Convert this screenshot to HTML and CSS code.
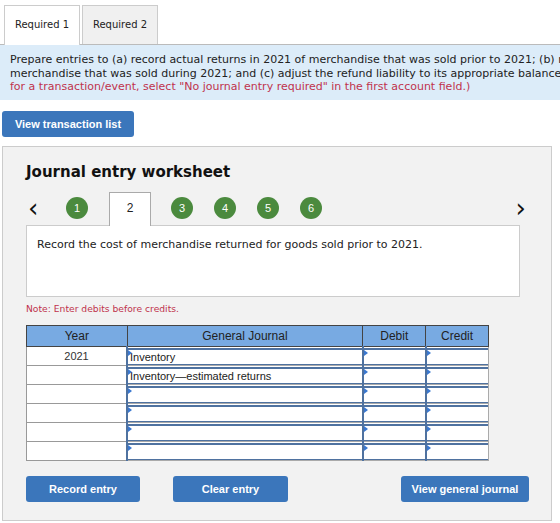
FILE: index.html
```html
<!DOCTYPE html>
<html lang="en">
<head>
    <meta charset="UTF-8">
    <title>Journal entry worksheet</title>
    <link rel="stylesheet" href="styles.css">
</head>
<body>
    <div class="tabs">
        <div class="tab active">Required 1</div>
        <div class="tab">Required 2</div>
    </div>
    <div class="instructions">
        Prepare entries to (a) record actual returns in 2021 of merchandise that was sold prior to 2021; (b) record actual returns of<br>
        merchandise that was sold during 2021; and (c) adjust the refund liability to its appropriate balance at year-end. (If no entry is required<br>
        <span class="red">for a transaction/event, select "No journal entry required" in the first account field.)</span>
    </div>

    <div class="top-actions">
        <button class="btn btn-list">View transaction list</button>
    </div>

    <div class="worksheet">
        <h2 class="ws-title">Journal entry worksheet</h2>
        <div class="steps">
            <span class="chev">&#8249;</span>
            <span class="dot first">1</span>
            <span class="step-tab">2</span>
            <span class="dot">3</span>
            <span class="dot">4</span>
            <span class="dot">5</span>
            <span class="dot">6</span>
            <span class="chev right">&#8250;</span>
        </div>
        <div class="desc">Record the cost of merchandise returned for goods sold prior to 2021.</div>
        <p class="note">Note: Enter debits before credits.</p>

        <table class="journal">
            <thead>
                <tr>
                    <th class="c-year">Year</th>
                    <th class="c-acct">General Journal</th>
                    <th class="c-amt">Debit</th>
                    <th class="c-amt">Credit</th>
                </tr>
            </thead>
            <tbody>
                <tr>
                    <td class="year">2021</td>
                    <td class="cell"><div class="field">Inventory</div></td>
                    <td class="cell"><div class="field"></div></td>
                    <td class="cell"><div class="field"></div></td>
                </tr>
                <tr>
                    <td class="year"></td>
                    <td class="cell"><div class="field">Inventory—estimated returns</div></td>
                    <td class="cell"><div class="field"></div></td>
                    <td class="cell"><div class="field"></div></td>
                </tr>
                <tr>
                    <td class="year"></td>
                    <td class="cell"><div class="field"></div></td>
                    <td class="cell"><div class="field"></div></td>
                    <td class="cell"><div class="field"></div></td>
                </tr>
                <tr>
                    <td class="year"></td>
                    <td class="cell"><div class="field"></div></td>
                    <td class="cell"><div class="field"></div></td>
                    <td class="cell"><div class="field"></div></td>
                </tr>
                <tr>
                    <td class="year"></td>
                    <td class="cell"><div class="field"></div></td>
                    <td class="cell"><div class="field"></div></td>
                    <td class="cell"><div class="field"></div></td>
                </tr>
                <tr>
                    <td class="year"></td>
                    <td class="cell"><div class="field"></div></td>
                    <td class="cell"><div class="field"></div></td>
                    <td class="cell"><div class="field"></div></td>
                </tr>
            </tbody>
        </table>

        <div class="bottom-actions">
            <button class="btn btn-record">Record entry</button>
            <button class="btn btn-clear">Clear entry</button>
            <button class="btn btn-view">View general journal</button>
        </div>
    </div>
</body>
</html>
```

FILE: styles.css
```css
body, html {
    margin: 0;
    padding: 0;
    background-color: #fff;
    overflow: hidden;
    font-family: "DejaVu Sans", Verdana, sans-serif;
    color: #222;
}
.tabs {
    display: flex;
    padding: 5px 0 0 4px;
    gap: 2px;
}
.tab {
    width: 76px;
    height: 39px;
    line-height: 38px;
    text-align: center;
    font-size: 10px;
    border: 1px solid #ccc;
    border-bottom: none;
    background-color: #f0f0f0;
    box-sizing: border-box;
}
.tab.active {
    background-color: #fff;
    position: relative;
    margin-bottom: -1px;
    height: 40px;
}
.instructions {
    width: 760px;
    box-sizing: border-box;
    background-color: #dcecf9;
    border-top: 1px solid #bbb;
    padding: 8px 10px 6px 10px;
    font-size: 11px;
    line-height: 13.5px;
    white-space: nowrap;
    height: 56px;
}
.red {
    color: #c0334d;
}
.top-actions {
    padding: 11px 0 9px 2px;
}
.btn {
    background-color: #3b76bb;
    color: #fff;
    border: none;
    border-radius: 3px;
    font-family: "Liberation Sans", Arial, sans-serif;
    font-weight: bold;
    font-size: 11px;
    height: 26px;
    padding: 0;
    cursor: pointer;
}
.btn-list {
    width: 132px;
}
.worksheet {
    width: 550px;
    height: 375px;
    box-sizing: border-box;
    margin-left: 2px;
    background-color: #f2f2f2;
    border: 1px solid #ccc;
    padding: 0 0 0 23px;
}
.ws-title {
    margin: 14px 0 0 0;
    font-size: 15px;
    font-weight: bold;
    line-height: 22px;
    color: #111;
}
.steps {
    display: flex;
    align-items: flex-end;
    height: 34px;
    margin-top: 8px;
    width: 494px;
    position: relative;
    z-index: 1;
}
.chev {
    font-size: 26px;
    line-height: 26px;
    color: #111;
    width: 14px;
    margin-left: 2px;
    align-self: center;
    font-family: "DejaVu Sans", sans-serif;
}
.chev.right {
    margin-left: auto;
    text-align: right;
    margin-right: -6px;
}
.dot {
    width: 22px;
    height: 22px;
    border-radius: 50%;
    background-color: #4b8a3e;
    color: #fff;
    font-family: "Liberation Sans", Arial, sans-serif;
    font-size: 11px;
    line-height: 22px;
    text-align: center;
    align-self: center;
    margin-left: 21px;
}
.dot.first {
    margin-left: 24px;
}
.step-tab {
    width: 42px;
    height: 34px;
    box-sizing: border-box;
    background-color: #fff;
    border: 1px solid #aaa;
    border-bottom: none;
    margin-left: 21px;
    margin-right: -1px;
    text-align: center;
    line-height: 30px;
    font-family: "Liberation Sans", Arial, sans-serif;
    font-size: 12px;
    margin-bottom: -1px;
}
.desc {
    width: 494px;
    height: 72px;
    box-sizing: border-box;
    background-color: #fff;
    border: 1px solid #ccc;
    padding: 12px 10px;
    font-size: 11px;
    color: #222;
}
.note {
    margin: 6px 0 11px 0;
    font-size: 9.2px;
    color: #c0334d;
}
.journal {
    border-collapse: collapse;
    font-family: "Liberation Sans", Arial, sans-serif;
    font-size: 11px;
    width: 463px;
}
.journal th {
    background-color: #78aae2;
    border: 1px solid #444;
    height: 20px;
    font-weight: normal;
    font-size: 12px;
    color: #222;
    padding: 0;
}
.c-year { width: 100px; }
.c-acct { width: 236px; }
.c-amt { width: 62px; }
.journal td {
    padding: 0;
    height: 18px;
    background-color: #fff;
}
.journal td.year {
    border: 1px solid #999;
    text-align: center;
    color: #333;
}
.journal td.cell {
    border: 1px solid #aaa;
    border-left: 2px solid #4f72a0;
}
.field {
    position: relative;
    height: 14px;
    border-top: 2px solid #4f72a0;
    border-bottom: 1px solid #4f72a0;
    padding-left: 2px;
    line-height: 14px;
    color: #222;
}
.field::before {
    content: "";
    position: absolute;
    left: 0;
    top: 0;
    border-left: 4px solid #3a78d0;
    border-top: 3px solid transparent;
    border-bottom: 3px solid transparent;
}
.bottom-actions {
    display: flex;
    margin-top: 15px;
    width: 503px;
}
.btn-record {
    width: 114px;
}
.btn-clear {
    width: 115px;
    margin-left: 33px;
}
.btn-view {
    width: 128px;
    margin-left: auto;
}
```
